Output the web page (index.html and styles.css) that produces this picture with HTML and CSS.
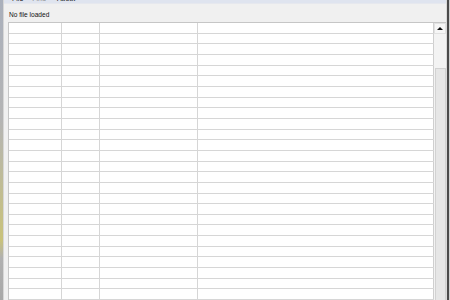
FILE: index.html
```html
<!DOCTYPE html>
<html lang="en">
<head>
  <meta charset="UTF-8">
  <title>Viewer</title>
  <link rel="stylesheet" href="styles.css">
</head>
<body>
  <div class="edge-left"></div>

  <div class="window">
    <div class="menubar">
      <span class="menu">File</span>
      <span class="menu disabled">Find</span>
      <span class="menu">About</span>
    </div>

    <div class="status">No file loaded</div>

    <div class="listview">
      <div class="rows" id="rows"></div>
      <div class="scrollbar">
        <div class="arrow-up"><span class="tri"></span></div>
        <div class="track">
          <div class="thumb"></div>
        </div>
      </div>
    </div>
  </div>

  <div class="edge-right"></div>

  <script>
    const rows = document.getElementById('rows');
    for (let i = 0; i < 28; i++) {
      const row = document.createElement('div');
      row.className = 'row';
      for (let c = 0; c < 4; c++) {
        const cell = document.createElement('div');
        cell.className = 'cell';
        row.appendChild(cell);
      }
      rows.appendChild(row);
    }
  </script>
</body>
</html>
```

FILE: styles.css
```css
html, body {
  margin: 0;
  height: 300px;
  overflow: hidden;
}
body {
  display: flex;
  background: #f0f0f0;
  font-family: "Liberation Sans", Arial, sans-serif;
  font-size: 6.6px;
  color: #000;
}
.edge-left {
  width: 3px;
  background: linear-gradient(to bottom, #aab0bc 0%, #b4b4b4 40%, #c9c27a 80%, #b0b0b0 86%, #a8a8a8 100%);
  border-right: 1px solid #d6d6d6;
}
.window {
  flex: 1;
  display: flex;
  flex-direction: column;
  min-width: 0;
}
.menubar {
  height: 17px;
  margin-top: -13px;
  background: #dfe4ef;
  border-bottom: 1px solid #e6e8ee;
  display: flex;
  align-items: flex-end;
  padding: 0 0 1px 4px;
  box-sizing: border-box;
}
.menu {
  padding: 0 4px;
  margin-right: 1px;
  font-size: 7px;
  line-height: 7px;
  color: #1a1a1a;
}
.menu.disabled {
  color: #8d8d8d;
  margin-right: 3px;
}
.status {
  height: 18px;
  padding: 7px 0 0 5px;
  box-sizing: border-box;
  line-height: 8px;
  color: #111;
}
.listview {
  flex: 1;
  display: flex;
  padding-left: 4px;
  min-height: 0;
}
.rows {
  flex: 1;
  background: #fff;
  border-top: 1px solid #c6c6c6;
  border-left: 1px solid #c6c6c6;
  overflow: hidden;
}
.row {
  display: grid;
  grid-template-columns: 53px 37.7px 98px 1fr;
  height: 10.67px;
  box-sizing: border-box;
  border-bottom: 1.3px solid #d6d6d6;
}
.cell {
  border-right: 1.3px solid #d6d6d6;
}
.cell:last-child {
  border-right: 1px solid #cfcfcf;
}
.scrollbar {
  width: 12px;
  display: flex;
  flex-direction: column;
  background: #f3f3f3;
  border-top: 1px solid #c6c6c6;
}
.arrow-up {
  height: 11px;
  background: #f6f6f6;
  border: 1px solid #e2e2e2;
  box-sizing: border-box;
  display: flex;
  align-items: center;
  justify-content: center;
}
.tri {
  width: 0;
  height: 0;
  border-left: 3px solid transparent;
  border-right: 3px solid transparent;
  border-bottom: 3px solid #111;
}
.track {
  flex: 1;
  display: flex;
  flex-direction: column;
  padding-top: 34px;
}
.thumb {
  flex: 1;
  margin-left: 1px;
  background: #e6e6e6;
  border: 1px solid #d2d2d2;
  border-bottom: none;
}
.edge-right {
  width: 4px;
  background: linear-gradient(to right, #d9d9d9 0, #d9d9d9 1px, #4a4a4a 1px, #4a4a4a 3px, #cfcfcf 3px);
}
```
